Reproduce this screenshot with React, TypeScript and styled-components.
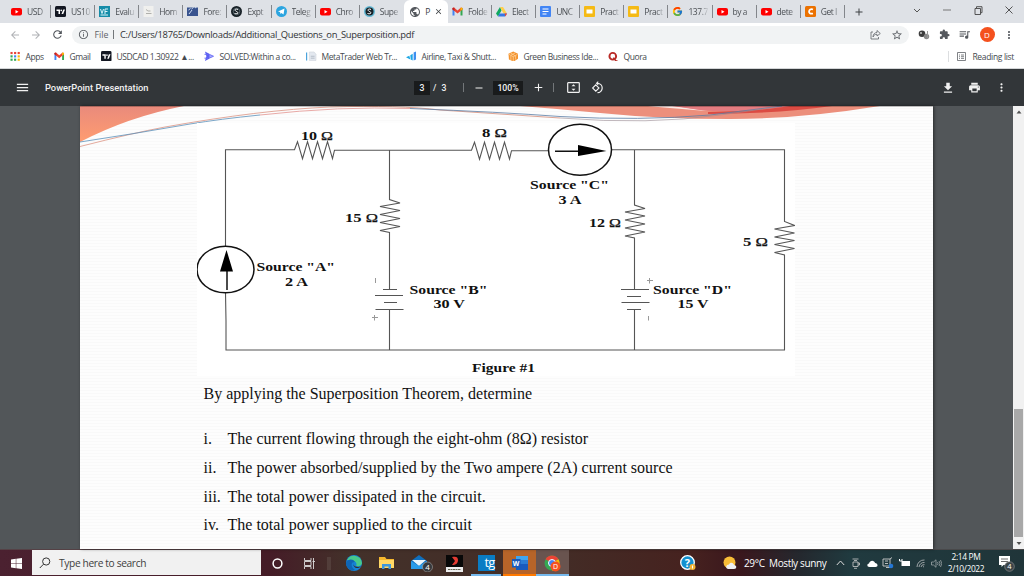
import React from "react";
import styled, { createGlobalStyle } from "styled-components";
import { FcGoogle } from "react-icons/fc";
import {
  MdArrowBack,
  MdArrowForward,
  MdRefresh,
  MdInfoOutline,
  MdStarBorder,
  MdExtension,
  MdMoreVert,
  MdMenu,
  MdDownload,
  MdPrint,
  MdPublic,
  MdClose,
  MdAdd,
  MdRemove,
  MdQueueMusic,
} from "react-icons/md";

const GlobalStyle = createGlobalStyle`
  * {
    box-sizing: border-box;
  }
  body {
    margin: 0;
    overflow: hidden;
    font-family: "Open Sans", "Noto Sans", sans-serif;
  }
  svg {
    display: block;
    flex-shrink: 0;
  }
`;

const Screen = styled.div`
  width: 1024px;
  height: 576px;
  display: flex;
  flex-direction: column;
  overflow: hidden;
`;

const TabStrip = styled.div`
  height: 23px;
  display: flex;
  align-items: stretch;
  padding-left: 7px;
  background-color: #dee1e6;
`;

const TabBox = styled.div<{ active?: boolean; line?: boolean }>`
  width: 44.1px;
  display: flex;
  align-items: center;
  padding-left: ${(props) => (props.active ? "5.5px" : "4px")};
  background-color: ${(props) => (props.active ? "#ffffff" : "transparent")};
  border-radius: 6px 6px 0 0;
  color: ${(props) => (props.active ? "#3c4043" : "#4b4f54")};
  &::after {
    content: "";
    width: 1px;
    height: 13px;
    margin-left: auto;
    background-color: ${(props) => (props.line ? "#83868b" : "transparent")};
  }
`;

const TabText = styled.span<{ short?: boolean }>`
  width: ${(props) => (props.short ? "9px" : "22px")};
  margin-left: ${(props) => (props.short ? "4px" : "5px")};
  font-size: 8.5px;
  line-height: 12px;
  letter-spacing: -0.45px;
  white-space: nowrap;
  mask-image: ${(props) =>
    props.short ? "none" : "linear-gradient(90deg, #000 55%, transparent 95%)"};
`;

const NewTab = styled.div`
  width: 28px;
  display: flex;
  align-items: center;
  justify-content: center;
  color: #3c4043;
`;

const WindowButtons = styled.div`
  margin-left: auto;
  width: 122px;
  height: 20px;
  display: flex;
  align-items: center;
  justify-content: space-around;
`;

const AddressRow = styled.div`
  height: 23px;
  display: flex;
  align-items: center;
  background-color: #ffffff;
  padding-left: 4px;
`;

const NavButton = styled.div<{ dim?: boolean }>`
  width: 21.5px;
  display: flex;
  justify-content: center;
  color: ${(props) => (props.dim ? "#b0b2b5" : "#50545a")};
`;

const Omnibox = styled.div`
  width: 837px;
  height: 18px;
  margin-left: 3.5px;
  padding: 0 6px;
  display: flex;
  align-items: center;
  border-radius: 9px;
  background-color: #f1f3f4;
  color: #5f6368;
  font-size: 9.4px;
`;

const FileWord = styled.span`
  margin-left: 5.5px;
  width: 18.5px;
  font-size: 8.8px;
`;

const Url = styled.span`
  margin-left: 6px;
  color: #303236;
  letter-spacing: -0.29px;
`;

const OmniActions = styled.div`
  margin-left: auto;
  display: flex;
  align-items: center;
  gap: 10px;
`;

const Extensions = styled.div`
  flex: 1;
  display: flex;
  align-items: center;
  justify-content: space-between;
  padding: 0 9px 0 9px;
  color: #55595e;
`;

const Avatar = styled.div`
  width: 15px;
  height: 15px;
  border-radius: 50%;
  background-color: #f4511e;
  color: #ffffff;
  font-size: 8px;
  line-height: 15px;
  text-align: center;
`;

const BookmarkRow = styled.div`
  height: 23px;
  display: flex;
  align-items: center;
  padding: 0 10px 2px 10px;
  background-color: #ffffff;
  border-bottom: 1px solid #d4d6d8;
`;

const BookmarkBox = styled.div<{ w: number }>`
  width: ${(props) => props.w}px;
  display: flex;
  align-items: center;
  gap: 5px;
  color: #45494e;
  font-size: 8.5px;
  letter-spacing: -0.4px;
  white-space: nowrap;
`;

const ReadingList = styled.div`
  margin-left: auto;
  display: flex;
  align-items: center;
  gap: 6px;
  padding-left: 8px;
  border-left: 1px solid #dcdee0;
  color: #45494e;
  font-size: 8.5px;
  letter-spacing: -0.33px;
`;

const PdfBar = styled.div`
  height: 37px;
  display: flex;
  align-items: center;
  background-color: #323639;
  color: #f1f1f1;
  font-family: Roboto, sans-serif;
  font-size: 9.3px;
  font-weight: 500;
`;

const PdfLeft = styled.div`
  width: 414px;
  padding-left: 15px;
`;

const PdfTitle = styled.div`
  display: flex;
  align-items: center;
  gap: 15px;
`;

const DarkField = styled.div<{ w: number }>`
  width: ${(props) => props.w}px;
  height: 14px;
  line-height: 14px;
  text-align: center;
  background-color: #191b1c;
  font-size: 8.7px;
`;

const PageTotal = styled.div`
  width: 33px;
  padding-left: 3px;
  word-spacing: 3px;
  font-size: 8.7px;
`;

const Divider = styled.div`
  width: 1px;
  height: 9px;
  background-color: #73777a;
`;

const PdfButton = styled.div<{ w: number }>`
  width: ${(props) => props.w}px;
  display: flex;
  justify-content: center;
`;

const PdfRight = styled.div`
  margin-left: auto;
  padding-right: 9px;
  display: flex;
`;

const Viewer = styled.div`
  height: 443px;
  display: flex;
  background-color: #525659;
`;

const Slide = styled.div`
  position: relative;
  width: 853px;
  margin-left: 80px;
  padding-left: 117px;
  background-color: #fdfdfd;
  background-image: repeating-linear-gradient(
    0deg,
    #fdfdfd 0,
    #fdfdfd 2px,
    #f9f9f9 2px,
    #f9f9f9 3px
  );
  box-shadow: 1px 0 3px rgba(0, 0, 0, 0.5);
`;

const Swoosh = styled.svg`
  position: absolute;
  left: 0;
  top: 0;
`;

const Circuit = styled.svg`
  position: relative;
`;

const Question = styled.p`
  margin: 6px 0 0 6.5px;
  font-family: "Liberation Serif", serif;
  font-size: 16px;
  line-height: 24px;
  color: #111111;
  white-space: nowrap;
`;

const Parts = styled.div`
  margin: 19px 0 0 6.5px;
  font-family: "Liberation Serif", serif;
  font-size: 16px;
  color: #111111;
`;

const Part = styled.div`
  height: 28.7px;
  display: grid;
  grid-template-columns: 24px auto;
  align-items: center;
  white-space: nowrap;
`;

const ScrollTrack = styled.div`
  width: 11px;
  margin-left: auto;
  padding: 3px 1px 3px 1px;
  display: flex;
  flex-direction: column;
  align-items: center;
  background-color: #f1f1f1;
`;

const ScrollThumb = styled.div`
  width: 9px;
  height: 128px;
  margin-top: auto;
  margin-bottom: 4px;
  background-color: #a8a8a8;
`;

const Taskbar = styled.div`
  height: 27px;
  display: flex;
  align-items: stretch;
  border-top: 1px solid rgba(90, 80, 80, 0.7);
  color: #ffffff;
  background: linear-gradient(
    90deg,
    #4b2130 0,
    #451c27 270px,
    #43312a 350px,
    #432c26 560px,
    #46221f 690px,
    #3a171d 740px,
    #24282e 800px,
    #203a3f 850px,
    #203539 1024px
  );
`;

const Search = styled.div`
  width: 229px;
  height: 25px;
  display: flex;
  align-items: center;
  gap: 8px;
  padding-left: 7px;
  background-color: #f1f1f1;
  color: #404040;
  font-size: 10.2px;
  letter-spacing: -0.35px;
`;

const TaskCell = styled.div<{ w: number; bg?: string; line?: string }>`
  width: ${(props) => props.w}px;
  display: flex;
  align-items: center;
  justify-content: center;
  background-color: ${(props) => props.bg || "transparent"};
  box-shadow: ${(props) =>
    props.line ? `inset 0 -2px 0 ${props.line}` : "none"};
`;

const TgTile = styled.div`
  width: 17px;
  height: 16px;
  background-color: #0a7cc4;
  font-size: 13px;
  line-height: 15px;
  text-align: right;
  letter-spacing: -0.8px;
`;

const Weather = styled.div`
  width: 110px;
  display: flex;
  align-items: center;
  gap: 7px;
  font-size: 10px;
  letter-spacing: -0.36px;
  white-space: nowrap;
`;

const Clock = styled.div`
  width: 44px;
  display: flex;
  flex-direction: column;
  justify-content: center;
  padding-bottom: 1px;
  text-align: center;
  font-size: 8.4px;
  line-height: 12px;
  letter-spacing: -0.35px;
  white-space: nowrap;
`;

const Right = styled.div`
  margin-left: auto;
  display: flex;
`;

type IconProps = { name: string; size?: number };

function SiteIcon({ name, size = 11 }: IconProps) {
  if (name === "google") return <FcGoogle size={size} />;
  if (name === "globe") return <MdPublic size={size + 1} color="#55595e" />;
  return (
    <svg width={size} height={size} viewBox="0 0 22 22">
      {name === "youtube" && (
        <>
          <rect x="0" y="4" width="22" height="15" rx="4" fill="#ff0000" />
          <path d="M9 8l6 3.5L9 15z" fill="#fff" />
        </>
      )}
      {name === "tv" && (
        <>
          <rect width="22" height="22" rx="3" fill="#131722" />
          <path d="M3 7h7v9H7v-6H3z M13 16l3.5-9H20l-3.600 9z" fill="#fff" />
          <circle cx="12.5" cy="8.700" r="1.700" fill="#fff" />
        </>
      )}
      {name === "vp" && (
        <>
          <rect width="22" height="22" fill="#168ca8" />
          <path
            d="M3 6l3 9 3-9M12 16V6h6M12 11h5M3 18h15"
            stroke="#d8f3f8"
            strokeWidth="2"
            fill="none"
          />
        </>
      )}
      {name === "paper" && (
        <>
          <rect x="1" width="20" height="22" fill="#f0f0ee" />
          <path d="M6 7l4 3h5M6 15h11" stroke="#b0b0ac" strokeWidth="2" fill="none" />
        </>
      )}
      {name === "forex" && (
        <>
          <path d="M0 3h22v17H0z" fill="#39548f" />
          <path d="M3 8l4-3M9 6l4-3M16 4l3-2M4 16l6-8" stroke="#cfdcf2" strokeWidth="2" />
        </>
      )}
      {name === "expt" && (
        <>
          <circle cx="11" cy="11" r="11" fill="#182127" />
          <path
            d="M14 7c-6-3-8 2-3 4s3 6-4 4"
            stroke="#fff"
            strokeWidth="2"
            fill="none"
          />
          <circle cx="11" cy="11" r="6.500" stroke="#8fa0a8" fill="none" />
        </>
      )}
      {name === "supe" && (
        <>
          <circle cx="11" cy="11" r="11" fill="#64b8d4" />
          <circle cx="11" cy="11" r="8" fill="#182127" />
          <path
            d="M14 7c-6-3-8 2-3 4s3 6-4 4"
            stroke="#fff"
            strokeWidth="2"
            fill="none"
          />
        </>
      )}
      {name === "telegram" && (
        <>
          <circle cx="11" cy="11" r="11" fill="#2ca5e0" />
          <path d="M4 11l13-6-2 12-4-3-2 2-1-4z" fill="#fff" />
        </>
      )}
      {name === "gmail" && (
        <>
          <path d="M1 4v15h4V9z" fill="#4285f4" />
          <path d="M21 4v15h-4V9z" fill="#34a853" />
          <path d="M1 4l3-1 7 6 7-6 3 1v3l-10 8L1 7z" fill="#ea4335" />
          <path d="M18 3l3 1v3l-4 3.200V4z" fill="#fbbc04" />
          <path d="M4 3L1 4v3l4 3.200V4z" fill="#c5221f" />
        </>
      )}
      {name === "drive" && (
        <>
          <path d="M8 2L0 15l4 6 7-12z" fill="#0fa960" />
          <path d="M8 2h6l8 13h-7z" fill="#ffcf48" />
          <path d="M7 15h15l-4 6H4z" fill="#3777e3" />
          <path d="M17 15h5l-3 6z" fill="#ea4335" />
        </>
      )}
      {name === "docs" && (
        <>
          <rect width="22" height="22" rx="2" fill="#4285f4" />
          <path d="M5 6h12M5 11h12M5 16h8" stroke="#fff" strokeWidth="2" />
        </>
      )}
      {name === "slides" && (
        <>
          <rect width="22" height="22" rx="2" fill="#f5ba15" />
          <rect x="5" y="7" width="12" height="8" fill="#fff" />
        </>
      )}
      {name === "chegg" && (
        <>
          <rect width="22" height="22" rx="3" fill="#eb7100" />
          <path
            d="M16 7c-9-4-12 11 0 8"
            stroke="#fff"
            strokeWidth="3.500"
            fill="none"
          />
        </>
      )}
      {name === "apps" &&
        ["#ea4335", "#ea4335", "#ea4335", "#34a853", "#4285f4", "#fbbc04", "#34a853", "#34a853", "#fbbc04"].map(
          (c, i) => (
            <rect
              key={i}
              x={1 + (i % 3) * 7.5}
              y={2 + Math.floor(i / 3) * 7}
              width="4.5"
              height="4.5"
              fill={c}
            />
          )
        )}
      {name === "solved" && (
        <>
          <path d="M2 1l9 5v10l-9 5 3-10z" fill="#5b5ff2" />
          <path d="M1 7h7M1 15h7M11 7l9 4-9 4z" stroke="#6c70f5" strokeWidth="2" fill="#a9abff" />
        </>
      )}
      {name === "meta" && (
        <>
          <path d="M1 3v17" stroke="#4ba3dc" strokeWidth="3" />
          <path d="M7 2h10l4 5v13H7z" fill="#e3e8ef" stroke="#c8ced6" />
          <path d="M10 11h8M10 15h8" stroke="#b3bbc6" strokeWidth="2" />
        </>
      )}
      {name === "airline" && (
        <>
          <path d="M0 13l7-3 2 8zM9 9l5-3v14l-4-2z" fill="#1ca6e4" />
          <path d="M16 3l5-2v17l-5 2z" fill="#3d8ff0" />
        </>
      )}
      {name === "green" && (
        <>
          <path d="M1 6l10-5 10 5v10l-9 6-10-4z" fill="#f3932e" />
          <path
            d="M2 7l9 5 9-5M11 12v9M5 4l10 6M15 4L6 9M6 10v9M16 10v8"
            stroke="#ffd7a3"
            fill="none"
            strokeWidth="1.5"
          />
        </>
      )}
      {name === "quora" && (
        <>
          <circle cx="10" cy="11" r="7" stroke="#b92b27" strokeWidth="4" fill="none" />
          <path d="M11 14l6 7h3" stroke="#b92b27" strokeWidth="3" fill="none" />
        </>
      )}
    </svg>
  );
}

const tabs = [
  { icon: "youtube", text: "USD" },
  { icon: "tv", text: "US10" },
  { icon: "vp", text: "Evalu" },
  { icon: "paper", text: "Hom" },
  { icon: "forex", text: "Fore:" },
  { icon: "expt", text: "Expt" },
  { icon: "telegram", text: "Teleg" },
  { icon: "youtube", text: "Chro" },
  { icon: "supe", text: "Supe", noLine: true },
  { icon: "globe", text: "P", active: true, noLine: true },
  { icon: "gmail", text: "Folde" },
  { icon: "drive", text: "Elect" },
  { icon: "docs", text: "UNC" },
  { icon: "slides", text: "Pract" },
  { icon: "slides", text: "Pract" },
  { icon: "google", text: "137.7" },
  { icon: "youtube", text: "by a" },
  { icon: "youtube", text: "dete" },
  { icon: "chegg", text: "Get I" },
];

const bookmarks = [
  { icon: "apps", text: "Apps", w: 44 },
  { icon: "gmail", text: "Gmail", w: 47 },
  { icon: "tv", text: "USDCAD 1.30922 ▲...", w: 103 },
  { icon: "solved", text: "SOLVED:Within a co...", w: 102 },
  { icon: "meta", text: "MetaTrader Web Tr...", w: 100 },
  { icon: "airline", text: "Airline, Taxi & Shutt...", w: 102 },
  { icon: "green", text: "Green Business Ide...", w: 100 },
  { icon: "quora", text: "Quora", w: 50 },
];

const parts = [
  ["i.", "The current flowing through the eight-ohm (8Ω) resistor"],
  ["ii.", "The power absorbed/supplied by the Two ampere (2A) current source"],
  ["iii.", "The total power dissipated in the circuit."],
  ["iv.", "The total power supplied to the circuit"],
];

// x, y (baseline), width, text
const labels: [number, number, number, string][] = [
  [530, 189, 79, 'Source "C"'],
  [558.5, 204, 23, "3 A"],
  [256.5, 271, 78.5, 'Source "A"'],
  [285, 285.7, 23, "2 A"],
  [409.5, 293.5, 78, 'Source "B"'],
  [433.5, 308, 31.5, "30 V"],
  [653, 293.5, 79, 'Source "D"'],
  [677.5, 308, 31, "15 V"],
  [472, 372, 63, "Figure #1"],
];

// x, y (baseline), width, resistance
const ohms: [number, number, number, string][] = [
  [301, 140, 32, "10"],
  [482, 136.7, 25, "8"],
  [345, 222, 33, "15"],
  [589, 227, 32, "12"],
  [743, 245.5, 25, "5"],
];

function CircuitDrawing() {
  return (
    <Circuit width="598" height="270" viewBox="197 106 598 270">
      <rect x="197" y="123" width="598" height="253" fill="#ffffff" />
      <g stroke="#555555" strokeWidth="1.1" fill="none">
        <path d="M225.500 246V149.700H294.500l3-8 5 17 5-17 5 17 5-17 5 17 5-17 5 17 2-8.500H471.500l3-8 5 17 5-17 5 17 5-17 5 17 5-17 5 17 2-8.500H549" />
        <path d="M611 149.700H784.500V221.500l10 4-20 3.500 20 4-20 4 20 3.500-20 4 20 4-20 4 10 2.500V350H226V321l-.5-28" />
        <path d="M389.500 150V199.500l10.500 3.500-20 3.500 20 4-20 4 20 4-20 4 20 4-20 4 9.500 2V289" />
        <path d="M634.500 150V205l10.500 3.500-20 3.500 20 4-20 4 20 4-20 4 20 4-20 4 9.500 2V289" />
        <path d="M383 289.500h14M375 295.500h28M384 302.500h13M375.500 309.500h28M389.500 309V350" />
        <path d="M621 289.500h28M627 296.500h14M621.500 302.500h28M627 309.500h14M634.500 309V350" />
      </g>
      <g stroke="#999999" fill="none">
        <path d="M375.500 278v5M372 317.500h6M374.500 315v5.500M647 280.500h6M649.500 278v5.500M648.500 316v4.500" />
      </g>
      <g stroke="#111111" strokeWidth="1.5" fill="none">
        <ellipse cx="225.500" cy="269.500" rx="28.500" ry="23.300" />
        <ellipse cx="580" cy="149.700" rx="31.500" ry="25.500" />
        <path d="M227 290V268M555 151.200h26" />
      </g>
      <path d="M226.500 250l6.500 21.500h-13z M578 145l28.500 6-28.500 5z" fill="#000000" />
      <g fontFamily="Liberation Serif, serif" fontWeight="700" fontSize="13.300" fill="#111111">
        {labels.map(([x, y, w, text]) => (
          <text key={text} x={x} y={y} textLength={w} lengthAdjust="spacingAndGlyphs">
            {text}
          </text>
        ))}
        {ohms.map(([x, y, w, value]) => (
          <text key={value} x={x} y={y} textLength={w} lengthAdjust="spacingAndGlyphs">
            {value} <tspan fontWeight="400" stroke="#111111" strokeWidth="0.25">Ω</tspan>
          </text>
        ))}
      </g>
    </Circuit>
  );
}

function SlideHeader() {
  return (
    <Swoosh width="853" height="45" viewBox="80 106 853 45">
      <defs>
        <linearGradient id="peach" x1="0" y1="0" x2="0" y2="1">
          <stop offset="0" stopColor="#e98a7c" />
          <stop offset="1" stopColor="#ff9c70" />
        </linearGradient>
      </defs>
      <path d="M80 106H184Q128 117 80 142z" fill="url(#peach)" />
      <path d="M520 106H880Q800 119 730 119Q660 119 600 113Q560 109 520 106z" fill="#ec8f7c" />
      <path d="M648 106H675L708 111Q680 109 648 106z" fill="#fbe9e6" />
      <path d="M672 106H800Q740 114 700 110z" fill="#e47c80" />
      <path d="M708 112Q760 111 790 106H832Q775 114 708 114z" fill="#dc4b43" />
      <g fill="none" strokeWidth="0.8">
        <path d="M80 146.500Q133 133 165 127Q260 110 330 107" stroke="#dc9484" />
        <path d="M80 142Q133 134 190 124Q220 119 260 115" stroke="#5a90ba" />
        <path d="M260 115Q340 106 410 108.500" stroke="#e39490" />
        <path d="M330 107Q400 105 440 110Q500 114 560 118" stroke="#d68d78" />
        <path d="M410 108.500Q500 112 560 116.500Q640 121 710 115Q750 110 782 106" stroke="#5b7da6" />
        <path d="M560 118Q650 125 720 115Q750 111 775 107" stroke="#9b8b93" strokeWidth="0.6" />
      </g>
      <path d="M80 106.500H933" stroke="#000" strokeOpacity="0.25" />
    </Swoosh>
  );
}

function Browser() {
  return (
    <>
      <TabStrip>
        {tabs.map((tab, i) => (
          <TabBox key={i} active={tab.active} line={!tab.noLine}>
            <SiteIcon name={tab.icon} />
            <TabText short={tab.active}>{tab.text}</TabText>
            {tab.active && <MdClose size={9} />}
          </TabBox>
        ))}
        <NewTab>
          <MdAdd size={12} />
        </NewTab>
        <WindowButtons>
          <svg width="8" height="5" viewBox="0 0 8 5">
            <path d="M1 1l3 3 3-3" stroke="#555" fill="none" />
          </svg>
          <svg width="8" height="2">
            <path d="M0 1h8" stroke="#777" />
          </svg>
          <svg width="9" height="9" viewBox="0 0 9 9">
            <path d="M1 2.500h5.500v6H1zM2.500 2V.7H8v6H7" stroke="#444" fill="none" strokeWidth="0.9" />
          </svg>
          <svg width="8" height="8" viewBox="0 0 8 8">
            <path d="M.5.500l7 7M7.500.500l-7 7" stroke="#444" strokeWidth="0.9" />
          </svg>
        </WindowButtons>
      </TabStrip>
      <AddressRow>
        <NavButton dim>
          <MdArrowBack size={12} />
        </NavButton>
        <NavButton dim>
          <MdArrowForward size={12} />
        </NavButton>
        <NavButton>
          <MdRefresh size={13} />
        </NavButton>
        <Omnibox>
          <MdInfoOutline size={11} />
          <FileWord>File</FileWord>
          <Divider />
          <Url>C:/Users/18765/Downloads/Additional_Questions_on_Superposition.pdf</Url>
          <OmniActions>
            <svg width="11" height="11" viewBox="0 0 11 11">
              <path
                d="M3 3H1v7h7.500V8M3 8c0-3 2-4.500 4-4.500V1.500L10.300 4.500 7 7V5.300C5 5.300 4 6 3 8z"
                stroke="#5f6368"
                strokeWidth="0.8"
                fill="none"
              />
            </svg>
            <MdStarBorder size={12} />
          </OmniActions>
        </Omnibox>
        <Extensions>
          <svg width="12" height="10" viewBox="0 0 12 10">
            <circle cx="4" cy="3.800" r="3.300" fill="#3d3d3d" />
            <circle cx="8.500" cy="6.500" r="2.700" fill="#8a8a8a" />
            <circle cx="3" cy="3" r="1" fill="#c8c8c8" />
            <path d="M9.500 1v7" stroke="#999" />
          </svg>
          <MdExtension size={11} />
          <MdQueueMusic size={13} />
          <Avatar>D</Avatar>
          <MdMoreVert size={12} />
        </Extensions>
      </AddressRow>
      <BookmarkRow>
        {bookmarks.map((mark) => (
          <BookmarkBox key={mark.text} w={mark.w}>
            <SiteIcon name={mark.icon} size={10.5} />
            {mark.text}
          </BookmarkBox>
        ))}
        <ReadingList>
          <svg width="9" height="9" viewBox="0 0 9 9">
            <path
              d="M.5.500h8v8h-8zM2 3h1M4 3h3M2 4.700h1M4 4.700h3M2 6.400h1M4 6.400h3"
              stroke="#5f6368"
              strokeWidth="0.8"
              fill="none"
            />
          </svg>
          Reading list
        </ReadingList>
      </BookmarkRow>
    </>
  );
}

function PdfToolbar() {
  return (
    <PdfBar>
      <PdfLeft>
        <PdfTitle>
          <MdMenu size={15} />
          PowerPoint Presentation
        </PdfTitle>
      </PdfLeft>
      <DarkField w={16}>3</DarkField>
      <PageTotal>/ 3</PageTotal>
      <Divider />
      <PdfButton w={29}>
        <MdRemove size={12} />
      </PdfButton>
      <DarkField w={30}>100%</DarkField>
      <PdfButton w={30}>
        <MdAdd size={13} />
      </PdfButton>
      <Divider />
      <PdfButton w={39}>
        <svg width="13" height="11" viewBox="0 0 13 11">
          <rect x="0.700" y="0.700" width="11.600" height="9.600" rx="0.500" stroke="#f1f1f1" strokeWidth="1.200" fill="none" />
          <path d="M6.500 2.200l2 2h-4zM6.500 8.800l2-2h-4z" fill="#f1f1f1" />
        </svg>
      </PdfButton>
      <PdfButton w={9}>
        <svg width="13" height="13" viewBox="0 0 13 13">
          <path d="M4.800 3.800l3.200 3.200-3.200 3.200L1.600 7z" stroke="#f1f1f1" strokeWidth="1.100" fill="none" />
          <path d="M6.500 2.300a4.700 4.700 0 1 1 0 9.400" stroke="#f1f1f1" strokeWidth="1.200" fill="none" />
          <path d="M7.200 0v4.600L4.700 2.300z" fill="#f1f1f1" />
        </svg>
      </PdfButton>
      <PdfRight>
        <PdfButton w={26}>
          <MdDownload size={14} />
        </PdfButton>
        <PdfButton w={27}>
          <MdPrint size={13} />
        </PdfButton>
        <PdfButton w={27}>
          <MdMoreVert size={13} />
        </PdfButton>
      </PdfRight>
    </PdfBar>
  );
}

function Tasks() {
  return (
    <Taskbar>
      <TaskCell w={32}>
        <svg width="11" height="11" viewBox="0 0 11 11">
          <path
            d="M0 1.500l4.800-.7v4.500H0zM5.300.700L11 0v5.300H5.300zM0 5.800h4.800v4.500L0 9.600zM5.300 5.800H11V11l-5.700-.7z"
            fill="#fff"
          />
        </svg>
      </TaskCell>
      <Search>
        <svg width="12" height="12" viewBox="0 0 12 12">
          <circle cx="7.200" cy="4.500" r="3.600" stroke="#333" fill="none" />
          <path d="M4.500 7.200L.8 11" stroke="#333" />
        </svg>
        Type here to search
      </Search>
      <TaskCell w={32}>
        <svg width="11" height="11" viewBox="0 0 11 11">
          <circle cx="5.500" cy="5.500" r="4.400" stroke="#fff" strokeWidth="1.500" fill="none" />
        </svg>
      </TaskCell>
      <TaskCell w={32}>
        <svg width="11" height="11" viewBox="0 0 11 11">
          <path
            d="M.5 0v2.500h6.500V0M.5 11V8.500h6.500V11M.5 3.500h6.500v4H.5zM9.500 0v11M8.500 3.500h2.500"
            stroke="#ddd"
            strokeWidth="0.9"
            fill="none"
          />
        </svg>
      </TaskCell>
      <TaskCell w={8}>
        <svg width="4" height="13">
          <path d="M1 0v13M3 0v13" stroke="#6b5a55" strokeWidth="0.8" />
        </svg>
      </TaskCell>
      <TaskCell w={4} />
      <TaskCell w={33}>
        <svg width="16" height="16" viewBox="0 0 16 16">
          <circle cx="8" cy="8" r="8" fill="#1583d6" />
          <path d="M1 5A8 8 0 0 1 16 8c0 3-4 4-6 2.500 2-3-2-6-9-5.500z" fill="#47c98b" />
          <path d="M0 8c1-4 7-5 9-1-4-1-5 5 0 8C4 17 0 12 0 8z" fill="#0f65b5" />
          <path d="M8 7c-2 3 1 6 7 4.500-1 1-3 1.800-4.500 1.500-3-.6-4-4-2.500-6z" fill="#3a2d2b" />
        </svg>
      </TaskCell>
      <TaskCell w={34}>
        <svg width="16" height="14" viewBox="0 0 16 14">
          <path d="M0 1h6l1.500 2H15v9H0z" fill="#f5b82e" />
          <path d="M0 4h15v8H0z" fill="#ffd866" />
          <path d="M3 13V8h9v5H9.500v-2.500h-4V13z" fill="#3c97dd" />
        </svg>
      </TaskCell>
      <TaskCell w={34}>
        <svg width="23" height="18" viewBox="0 0 23 18">
          <path d="M1 7l8-6 8 6v8H1z" fill="#0f6fbe" />
          <path d="M2 6h14l-7 6z" fill="#e9f4fb" />
          <path d="M1 7l8 5 8-5v8H1z" fill="#2a9be8" />
          <circle cx="17.500" cy="13" r="5" fill="#36393c" stroke="#a5a5a5" strokeWidth="0.6" />
          <text x="15.300" y="16" fontSize="8" fill="#fff">4</text>
        </svg>
      </TaskCell>
      <TaskCell w={33}>
        <svg width="17" height="17" viewBox="0 0 17 17">
          <path d="M0 0h17v12H0z" fill="#080808" />
          <path d="M0 12h17v5H0z" fill="#eeeeee" />
          <path d="M6 2c4-1 6 0 6 3s-2 5-6 5l3-4z" fill="#e43b32" />
          <path d="M2 14.500h13" stroke="#665" strokeDasharray="2 .5" />
        </svg>
      </TaskCell>
      <TaskCell w={30} line="#76b9ed">
        <TgTile>tg</TgTile>
      </TaskCell>
      <TaskCell w={2} />
      <TaskCell w={33} bg="#b76429" line="#ff7900">
        <svg width="16" height="16" viewBox="0 0 16 16">
          <path d="M4 1h12v14H4z" fill="#185abd" />
          <path d="M4 1h12v4H4z" fill="#41a5ee" />
          <path d="M4 5h12v4H4z" fill="#2b7cd3" />
          <rect y="4" width="8.500" height="8.500" fill="#185abd" />
          <text x="0.800" y="10.700" fontSize="6.800" fontWeight="700" fill="#fff">W</text>
        </svg>
      </TaskCell>
      <TaskCell w={33} bg="#69544f" line="#76b9ed">
        <svg width="17" height="17" viewBox="0 0 17 17">
          <circle cx="8" cy="8" r="7.500" fill="#34a853" />
          <path d="M8 8L1.500 4.200A7.500 7.500 0 0 1 14.500 4.200z" fill="#ea4335" />
          <path d="M8 8l6.500-3.800A7.500 7.500 0 0 1 8 15.500z" fill="#fbbc04" />
          <circle cx="8" cy="8" r="3.500" fill="#4285f4" stroke="#fff" />
          <circle cx="11.500" cy="11.500" r="5" fill="#f4511e" />
          <text x="9" y="14.100" fontSize="7" fill="#fff">D</text>
        </svg>
      </TaskCell>
      <Right>
        <TaskCell w={34}>
          <svg width="16" height="16" viewBox="0 0 16 16">
            <circle cx="7.500" cy="7.500" r="6.800" fill="#1291d0" stroke="#fff" strokeWidth="1.300" />
            <text x="4.800" y="11.500" fontSize="11" fontWeight="700" fill="#fff">?</text>
            <circle cx="12.500" cy="12" r="3" fill="#f3b534" />
            <path d="M12.500 10.500v3" stroke="#fff" />
          </svg>
        </TaskCell>
        <TaskCell w={18} />
        <Weather>
          <svg width="14" height="14" viewBox="0 0 14 14">
            <circle cx="6.500" cy="6.500" r="6" fill="#f9bd37" />
            <path d="M5 13c-3-1-2-4.500 1-4.500 1-3 5-2 5 .5 3 0 3 4 0 4z" fill="#eef0f4" />
          </svg>
          <span>29°C&nbsp; Mostly sunny</span>
        </Weather>
        <TaskCell w={14}>
          <svg width="9" height="6" viewBox="0 0 9 6">
            <path d="M.8 5l3.700-4 3.700 4" stroke="#ddd" fill="none" />
          </svg>
        </TaskCell>
        <TaskCell w={17}>
          <svg width="8" height="11" viewBox="0 0 8 11">
            <path
              d="M.5 1h6M1 4h5v4.500H1zM6 5h1.500v2H6M2 10.300h3M2 2.500h3"
              stroke="#ccc"
              strokeWidth="0.8"
              fill="none"
            />
          </svg>
        </TaskCell>
        <TaskCell w={16}>
          <svg width="11" height="7" viewBox="0 0 11 7">
            <path d="M2.500 7C-.5 7 0 3.500 2 3.500 3-.5 7.500 0 8 3c3 0 3.500 4 .5 4z" fill="#fff" />
          </svg>
        </TaskCell>
        <TaskCell w={16}>
          <svg width="12" height="12" viewBox="0 0 12 12">
            <path
              d="M1 2h7v7H1zM8 2l2-1.500M3 4h3M3 6.500h3M4 10.500h4"
              stroke="#ccc"
              strokeWidth="0.9"
              fill="none"
            />
            <circle cx="9" cy="9" r="2.300" fill="#2577d4" />
          </svg>
        </TaskCell>
        <TaskCell w={16}>
          <svg width="11" height="8" viewBox="0 0 11 8">
            <path d="M2.500 2H11v5H2.500z" fill="#fff" />
            <path d="M.5 0v2h2.500M3 0v2" stroke="#fff" fill="none" />
          </svg>
        </TaskCell>
        <TaskCell w={16}>
          <svg width="9" height="9" viewBox="0 0 9 9">
            <path
              d="M1 8a7 7 0 0 1 7.500-7M3 8a5 5 0 0 1 5.500-4.500M5 8a3 3 0 0 1 3.500-2.300M7 8l1-.5"
              stroke="#aab0b2"
              strokeWidth="0.9"
              fill="none"
            />
          </svg>
        </TaskCell>
        <TaskCell w={16}>
          <svg width="11" height="9" viewBox="0 0 11 9">
            <path
              d="M.5 3h2L5 .8v7.500L2.500 6h-2zM6.500 3q1 1.500 0 3M8 2q2 2.500 0 5M9.500 1q2.500 3.500 0 7"
              stroke="#9fa7aa"
              strokeWidth="0.8"
              fill="none"
            />
          </svg>
        </TaskCell>
        <Clock>
          <span>2:14 PM</span>
          <span>2/10/2022</span>
        </Clock>
        <TaskCell w={36}>
          <svg width="17" height="17" viewBox="0 0 17 17">
            <path d="M1 1h11v9H5.500L3.500 12v-2H1z" fill="#fff" />
            <path d="M3 4h7M3 6.500h7" stroke="#444" strokeWidth="0.8" />
            <circle cx="11.500" cy="11.500" r="4.800" fill="#3d4548" stroke="#999" strokeWidth="0.6" />
            <text x="9.300" y="14.300" fontSize="7.500" fill="#fff">4</text>
          </svg>
        </TaskCell>
      </Right>
    </Taskbar>
  );
}

function App() {
  return (
    <Screen>
      <GlobalStyle />
      <Browser />
      <PdfToolbar />
      <Viewer>
        <Slide>
          <SlideHeader />
          <CircuitDrawing />
          <Question>By applying the Superposition Theorem, determine</Question>
          <Parts>
            {parts.map(([num, text]) => (
              <Part key={num}>
                <span>{num}</span>
                <span>{text}</span>
              </Part>
            ))}
          </Parts>
        </Slide>
        <ScrollTrack>
          <svg width="6" height="6" viewBox="0 0 6 6">
            <path d="M3 1.500l2.500 3h-5z" fill="#505050" />
          </svg>
          <ScrollThumb />
          <svg width="6" height="5" viewBox="0 0 6 5">
            <path d="M3 4l2.500-3h-5z" fill="#505050" />
          </svg>
        </ScrollTrack>
      </Viewer>
      <Tasks />
    </Screen>
  );
}

export default App;
